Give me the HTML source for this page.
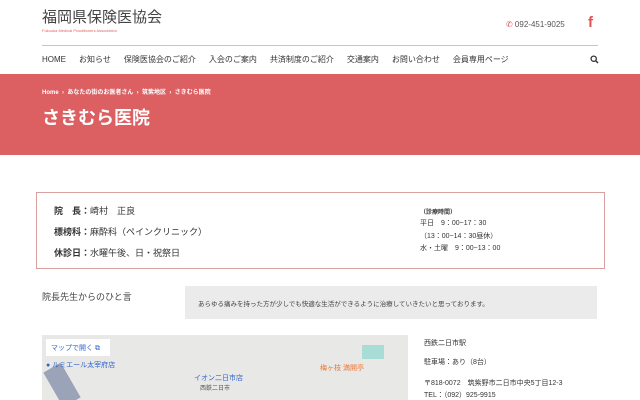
<!DOCTYPE html>
<html><head><meta charset="utf-8"><style>
*{margin:0;padding:0;box-sizing:border-box}
body{width:640px;height:400px;overflow:hidden;background:#fff;font-family:"Liberation Sans","Noto Sans CJK JP",sans-serif;color:#333;position:relative}
.a{position:absolute;white-space:nowrap}
</style></head><body>
<div class="a" style="left:42px;top:9px;font-size:15px;line-height:17px;color:#444">福岡県保険医協会</div>
<div class="a" style="left:42px;top:28px;font-size:4px;color:#d66">Fukuoka Medical Practitioners Association</div>
<div class="a" style="left:506px;top:20px;font-size:8px;color:#555"><span style="color:#d55">&#9990;</span> 092-451-9025</div>
<div class="a" style="left:588px;top:14px;font-size:15px;color:#d55;font-weight:bold">f</div>
<div class="a" style="left:42px;top:45px;width:556px;height:1px;background:#dbb"></div>
<div class="a" style="left:42px;top:54px;font-size:8px;color:#333">
<span style="margin-right:13px">HOME</span><span style="margin-right:13px">お知らせ</span><span style="margin-right:13px">保険医協会のご紹介</span><span style="margin-right:13px">入会のご案内</span><span style="margin-right:13px">共済制度のご紹介</span><span style="margin-right:13px">交通案内</span><span style="margin-right:13px">お問い合わせ</span><span>会員専用ページ</span></div>
<svg class="a" style="left:590px;top:55px" width="9" height="9" viewBox="0 0 9 9"><circle cx="3.7" cy="3.7" r="2.6" fill="none" stroke="#333" stroke-width="1.3"/><path d="M5.6 5.6L8 8" stroke="#333" stroke-width="1.5"/></svg>
<div class="a" style="left:0;top:74px;width:640px;height:81px;background:#dc5f62"></div>
<div class="a" style="left:42px;top:87px;font-size:6px;color:#fff;font-weight:bold">Home &nbsp;›&nbsp; あなたの街のお医者さん &nbsp;›&nbsp; 筑紫地区 &nbsp;›&nbsp; さきむら医院</div>
<div class="a" style="left:42px;top:104px;font-size:18px;color:#fff;font-weight:bold">さきむら医院</div>
<div class="a" style="left:36px;top:192px;width:569px;height:77px;border:1px solid #d9a0a0"></div>
<div class="a" style="left:54px;top:204px;font-size:9px"><b>院　長：</b>崎村　正良</div>
<div class="a" style="left:54px;top:225px;font-size:9px"><b>標榜科：</b>麻酔科（ペインクリニック）</div>
<div class="a" style="left:54px;top:246px;font-size:9px"><b>休診日：</b>水曜午後、日・祝祭日</div>
<div class="a" style="left:420px;top:207px;font-size:6px;font-weight:bold">（診療時間）</div>
<div class="a" style="left:420px;top:218px;font-size:7px;line-height:12.5px">平日　9：00~17：30<br>（13：00~14：30昼休）<br>水・土曜　9：00~13：00</div>
<div class="a" style="left:42px;top:290px;font-size:9px;color:#444">院長先生からのひと言</div>
<div class="a" style="left:185px;top:286px;width:412px;height:33px;background:#ebebeb"></div>
<div class="a" style="left:198px;top:298px;font-size:6.5px;color:#444">あらゆる痛みを持った方が少しでも快適な生活ができるように治療していきたいと思っております。</div>
<div class="a" style="left:42px;top:335px;width:366px;height:65px;background:#e8e8e6;overflow:hidden">
<div class="a" style="left:10px;top:30px;width:20px;height:40px;background:#9aa3b8;transform:rotate(-30deg)"></div>
<div class="a" style="left:320px;top:10px;width:22px;height:14px;background:#a8dcd6"></div>
<div class="a" style="left:4px;top:4px;width:64px;height:17px;background:#fff;font-size:7px;color:#36c;padding:4px 5px">マップで開く ⧉</div>
<div class="a" style="left:4px;top:25px;font-size:7px;color:#36c">● ルミエール太宰府店</div>
<div class="a" style="left:152px;top:38px;font-size:7px;color:#36c">イオン二日市店</div>
<div class="a" style="left:158px;top:48px;font-size:6px;color:#555">西鉄二日市</div>
<div class="a" style="left:278px;top:28px;font-size:7px;color:#e73">梅ヶ枝 満開亭</div>
</div>
<div class="a" style="left:424px;top:338px;font-size:7px">西鉄二日市駅</div>
<div class="a" style="left:424px;top:357px;font-size:7px">駐車場：あり（8台）</div>
<div class="a" style="left:424px;top:378px;font-size:7px">〒818-0072　筑紫野市二日市中央5丁目12-3</div>
<div class="a" style="left:424px;top:390px;font-size:7px">TEL：（092）925-9915</div>
</body></html>
